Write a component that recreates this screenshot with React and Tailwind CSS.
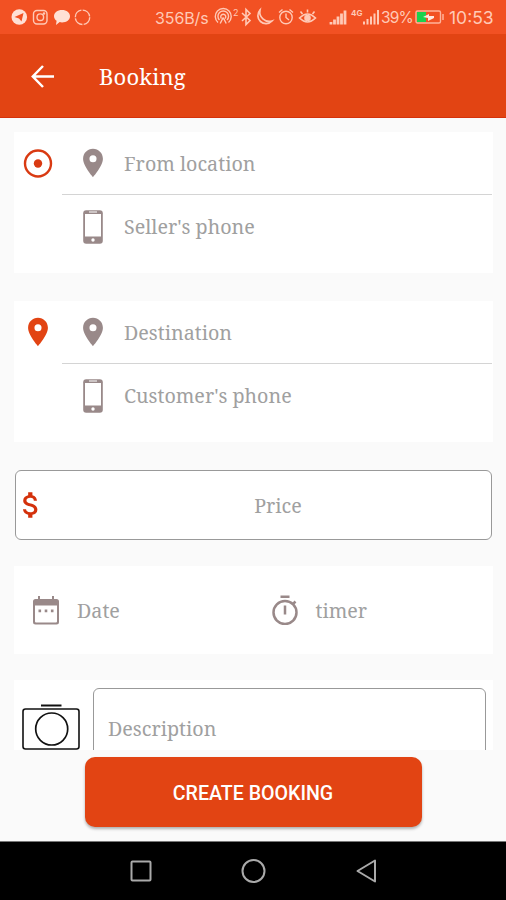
const SERIF = "font-['Noto_Serif','Droid_Serif','DejaVu_Serif_Condensed','DejaVu_Serif',serif]"

function PinIcon({ className }) {
  return (
    <svg viewBox="0 0 24 24" className={`h-[34px] w-[34px] ${className}`} fill="currentColor">
      <path d="M12 2C8.13 2 5 5.13 5 9c0 5.25 7 13 7 13s7-7.75 7-13c0-3.87-3.13-7-7-7zm0 9.5a2.5 2.5 0 1 1 0-5 2.5 2.5 0 0 1 0 5z" />
    </svg>
  )
}

function TargetIcon() {
  return (
    <svg viewBox="0 0 34 34" className="h-[34px] w-[34px] text-[#d93a12]">
      <circle cx="17" cy="17.5" r="13" fill="none" stroke="currentColor" strokeWidth="2.4" />
      <circle cx="17" cy="17.5" r="4.2" fill="currentColor" />
    </svg>
  )
}

function PhoneIcon() {
  return (
    <svg viewBox="0 0 20 34" className="h-[34px] w-5">
      <rect x="0.2" y="0.2" width="19.6" height="33.6" rx="3" fill="#998989" />
      <rect x="2" y="4" width="16" height="22.5" fill="#fff" />
      <path d="M6 2h8" stroke="#fff" strokeWidth="1" />
      <circle cx="10" cy="30" r="1.7" fill="#fff" />
    </svg>
  )
}

function CalendarIcon() {
  return (
    <svg viewBox="0 0 26 29" className="h-[29px] w-[26px]" fill="#998989">
      <path d="M5 0h2v4H5zM19 0h2v4h-2z" />
      <path fillRule="evenodd" d="M2.5 3h21A2.5 2.5 0 0 1 26 5.5v20.500a2.500 2.500 0 0 1-2.500 2.500h-21A2.500 2.500 0 0 1 0 26V5.500A2.500 2.500 0 0 1 2.500 3zM2 9.500v16q0 1 1 1h20q1 0 1-1v-16z" />
      <path d="M5.500 13.500h2.600v2.800h-2.600zM11.700 13.500h2.600v2.800h-2.600zM17.900 13.500h2.600v2.800h-2.600z" />
    </svg>
  )
}

function TimerIcon() {
  return (
    <svg viewBox="0 0 28 30" className="h-[30px] w-7" fill="none" stroke="#998989" strokeWidth="2.500">
      <circle cx="14" cy="17.500" r="11.500" />
      <path d="M9.500 1.700h9M14 10.500v9M21.500 9.500l3-3" />
    </svg>
  )
}

function CameraIcon() {
  return (
    <svg viewBox="0 0 58 46" className="h-[46px] w-[58px]" fill="none" stroke="#111">
      <path d="M19 1.500h20.500" strokeWidth="2" />
      <rect x="1" y="5" width="56" height="40" rx="2.500" strokeWidth="1.600" />
      <circle cx="29.700" cy="25" r="16" strokeWidth="1.700" />
    </svg>
  )
}

function StatusBar() {
  return (
    <div className="flex h-[34px] items-center bg-[#f25123] pl-[11px] text-[#ffc9b6]">
      <svg viewBox="0 0 82 18" className="h-[18px] w-[82px] shrink-0" fill="none" stroke="currentColor" strokeWidth="1.400">
        <circle cx="8.300" cy="9" r="7.800" fill="#ffe0d5" stroke="none" />
        <path d="M3.500 9l9-4-2 8.500-2.500-3z" fill="#f25123" stroke="none" />
        <rect x="22.500" y="2.500" width="13.500" height="13.500" rx="3.500" />
        <circle cx="29.300" cy="9.200" r="3.300" />
        <circle cx="33" cy="5.500" r=".6" fill="currentColor" />
        <path d="M51 2c4.600 0 8 2.700 8 6.200s-3.400 6.200-8 6.200c-.8 0-1.600-.1-2.300-.3L45 17l.6-4.200C44 11.600 43 10 43 8.200 43 4.700 46.400 2 51 2z" fill="#ffe0d5" stroke="none" />
        <circle cx="71.500" cy="9.300" r="7.200" strokeDasharray="10 1.300" />
      </svg>
      <span className="ml-[62px] w-[55px] pt-0.5 font-[Inter,sans-serif] text-[16px] leading-none tracking-[-0.1px] whitespace-nowrap">356B/s</span>
      <svg viewBox="0 0 168 20" className="ml-1 h-5 w-[168px] shrink-0" fill="none" stroke="currentColor" strokeWidth="1.400">
        {/* hotspot */}
        <path d="M4 15.500A8 8 0 1 1 14.500 15.500M5.500 13A5.300 5.300 0 1 1 13 13M7.500 11.500a2.500 2.500 0 1 1 3.500 0M9.200 10.500l-3 6M9.200 10.500l3 6" />
        <text x="19" y="8.500" fontSize="9" fontFamily="Inter" fill="currentColor" stroke="none">2</text>
        {/* bluetooth */}
        <path d="M28 6l8 7.500-4 4V2.500l4 4-8 7.500" strokeWidth="1.600" />
        {/* moon */}
        <path d="M46 3a7.500 7.500 0 1 0 12 11A9.500 9.500 0 0 1 46 3z" strokeWidth="1.700" />
        {/* alarm */}
        <circle cx="72" cy="10.500" r="6.200" />
        <path d="M72 6.500v4l3 2.500M65 5.500l3.500-3M79 5.500l-3.500-3" />
        {/* eye */}
        <path d="M85.500 11q8-8 16 0-8 8-16 0zM93.500 5.500V2.500M88.500 7l-2-2.500M98.500 7l2-2.500" strokeWidth="1.600" />
        <circle cx="93.500" cy="11" r="2.600" fill="currentColor" />
        {/* signal */}
        <path d="M117 17.500v-2.500M120.500 17.500v-5M124 17.500v-8M127.500 17.500V6.500M131 17.500V3.500" strokeWidth="2.800" />
        <text x="137" y="8.500" fontSize="8" fontWeight="700" fontFamily="Inter" fill="currentColor" stroke="none">4G</text>
        <path d="M150 17.500v-3M153.500 17.500v-5.500M157 17.500v-8M160.500 17.500V6.500M164 17.500V3" strokeWidth="2" />
      </svg>
      <span className="-ml-px w-[32px] pt-px font-[Inter,sans-serif] text-[15.500px] leading-none tracking-[-0.9px] whitespace-nowrap">39%</span>
      <svg viewBox="0 0 30 16" className="ml-[2px] h-4 w-[30px] shrink-0">
        <rect x="1" y="2" width="24.500" height="12" rx="1.500" fill="none" stroke="#ffb39b" strokeWidth="1.400" />
        <path d="M2 3h9v10H2z" fill="#1bd14e" />
        <path d="M8 8l6-3v2h5v2l-6 3v-3z" fill="#ffe9e0" />
        <path d="M28 5v6" stroke="#ffb39b" strokeWidth="1.500" />
      </svg>
      <span className="ml-[4px] pt-0.5 font-[Inter,sans-serif] text-[17.500px] leading-none whitespace-nowrap">10:53</span>
    </div>
  )
}

function LocationCard({ marker, place, phone }) {
  return (
    <section className="flex h-[141px] bg-white">
      <div className="flex h-[62px] w-12 shrink-0 items-center justify-center">{marker}</div>
      <div className="mr-px flex-1">
        <div className="flex h-[63px] items-center border-b border-[#d4d4d4]">
          <PinIcon className="ml-3.5 text-[#998989]" />
          <span className="ml-3.5 pt-0.5">{place}</span>
        </div>
        <div className="flex h-[63px] items-center">
          <span className="ml-[21px]"><PhoneIcon /></span>
          <span className="ml-[21px]">{phone}</span>
        </div>
      </div>
    </section>
  )
}

export default function App() {
  return (
    <div className={`flex h-[900px] w-[506px] flex-col overflow-hidden bg-[#fafafa] ${SERIF}`}>
      <StatusBar />
      <header className="flex h-[84px] shrink-0 items-center border-b border-[#d5320c] bg-[#e24413] pl-[31px] text-white">
        <svg viewBox="0 0 24 24" className="h-6 w-6" fill="none" stroke="currentColor" strokeWidth="2.500">
          <path d="M23 12.500H2.500M12 2L1.800 12.500 12 23" />
        </svg>
        <h1 className="ml-11 pt-0.5 text-[22px] tracking-[0.15px]">Booking</h1>
      </header>

      <main className="flex h-[632px] shrink-0 flex-col gap-7 overflow-hidden pt-3.5 pr-[13px] pl-3.5 text-[19.700px] text-[#a0a0a0]">
        <div className="flex shrink-0 flex-col gap-7">
          <LocationCard marker={<TargetIcon />} place="From location" phone="Seller's phone" />
          <LocationCard marker={<PinIcon className="text-[#e24413]" />} place="Destination" phone="Customer's phone" />
        </div>

        <div className="mx-px flex h-[70px] shrink-0 items-center rounded-md border border-[#999] bg-white">
          <svg viewBox="0 0 24 24" className="-ml-[2px] h-[34px] w-[34px] text-[#d4310b]" fill="currentColor">
            <path d="M11.800 10.900c-2.270-.59-3-1.200-3-2.150 0-1.090 1.010-1.850 2.700-1.850 1.780 0 2.440.85 2.500 2.100h2.210c-.07-1.720-1.120-3.300-3.210-3.810V3h-3v2.160c-1.940.42-3.500 1.680-3.500 3.610 0 2.310 1.910 3.460 4.700 4.130 2.500.6 3 1.480 3 2.410 0 .69-.49 1.790-2.700 1.790-2.060 0-2.870-.92-2.980-2.100h-2.200c.12 2.190 1.760 3.420 3.680 3.830V21h3v-2.150c1.950-.37 3.500-1.500 3.500-3.550 0-2.840-2.430-3.810-4.700-4.400z" />
          </svg>
          <span className="ml-[17px] flex-1 pt-0.5 text-center">Price</span>
        </div>

        <section className="-mt-0.5 grid h-[88px] shrink-0 grid-cols-2 bg-white">
          <div className="flex items-center pl-[18.500px]">
            <CalendarIcon />
            <span className="ml-[18.500px] pt-0.5">Date</span>
          </div>
          <div className="flex items-center pl-[17px]">
            <TimerIcon />
            <span className="ml-[17px] pt-0.5">timer</span>
          </div>
        </section>

        <section className="-mt-0.5 flex h-[120px] shrink-0 bg-white">
          <div className="mt-6 ml-2"><CameraIcon /></div>
          <div className="mt-2 ml-[13px] h-[110px] w-[393px] rounded-md border border-[#999] pt-[25px] pl-3.5">
            Description
          </div>
        </section>
      </main>

      <div className="flex h-[91px] shrink-0 justify-center pt-[7px]">
        <button className="h-[70px] w-[337px] rounded-[10px] bg-[#e24413] pt-[3px] font-[Roboto,sans-serif] text-[19.600px] font-medium text-white shadow-[0_2px_3px_rgba(0,0,0,0.3)]">
          CREATE BOOKING
        </button>
      </div>

      <nav className="flex h-[59px] shrink-0 items-center border-t border-[#777] bg-black">
        <svg viewBox="0 0 260 28" className="ml-[129px] h-7 w-[260px]" fill="none" stroke="#aaa" strokeWidth="2">
          <rect x="2.500" y="4.500" width="19" height="19" rx="1" />
          <circle cx="124.500" cy="14" r="11" />
          <path d="M246 3.500v21L228.500 14z" strokeLinejoin="round" />
        </svg>
      </nav>
    </div>
  )
}
